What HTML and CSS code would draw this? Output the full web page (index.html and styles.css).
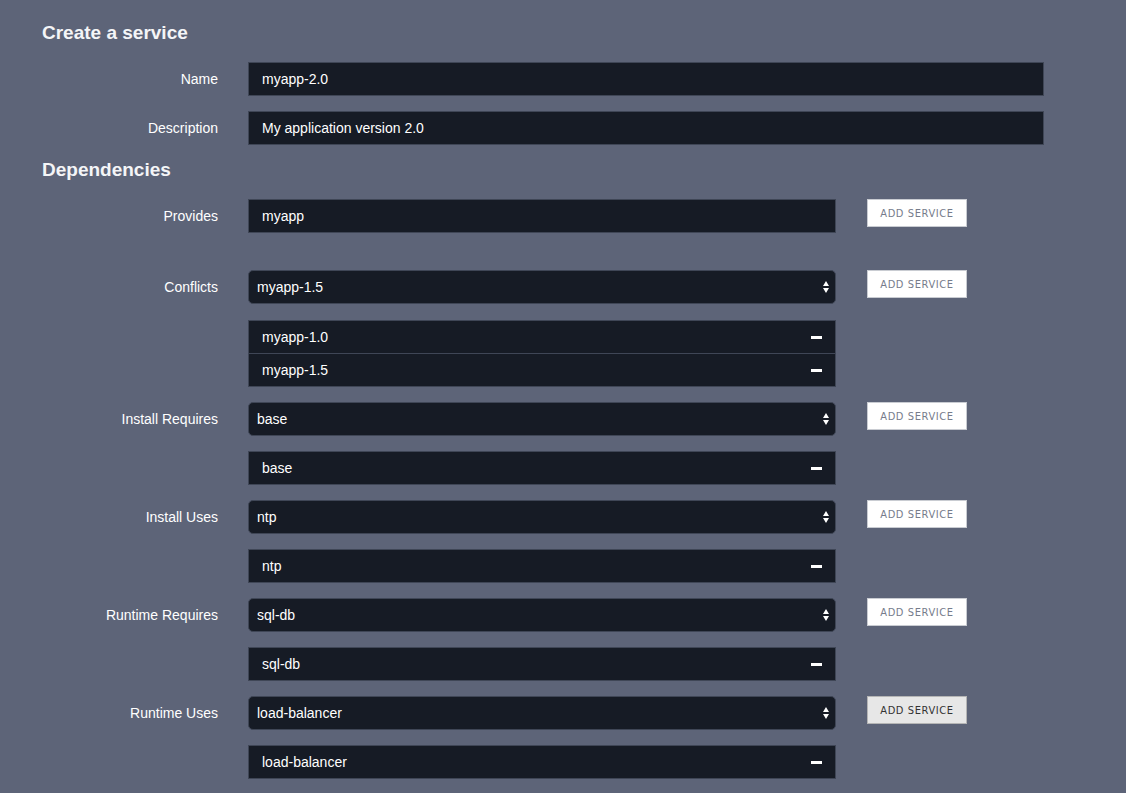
FILE: index.html
```html
<!DOCTYPE html>
<html>
<head>
<meta charset="utf-8">
<link rel="stylesheet" href="styles.css">
</head>
<body>
<div class="page">
  <h2 class="title">Create a service</h2>
  <div class="row">
    <div class="label">Name</div>
    <div class="field wide"><div class="input">myapp-2.0</div></div>
  </div>
  <div class="row">
    <div class="label">Description</div>
    <div class="field wide"><div class="input">My application version 2.0</div></div>
  </div>

  <h2 class="title deps">Dependencies</h2>

  <div class="row group provides">
    <div class="label">Provides</div>
    <div class="field"><div class="input">myapp</div></div>
    <button class="btn">ADD SERVICE</button>
  </div>

  <div class="row group">
    <div class="label">Conflicts</div>
    <div class="field">
      <div class="select"><span>myapp-1.5</span><svg class="arrows" width="6" height="12" viewBox="0 0 6 12"><path d="M3 0 L6 5 L0 5 Z M0 7 L6 7 L3 12 Z" fill="#fff"/></svg></div>
      <div class="list multi">
        <div class="item"><span>myapp-1.0</span><i class="minus"></i></div>
        <div class="item"><span>myapp-1.5</span><i class="minus"></i></div>
      </div>
    </div>
    <button class="btn">ADD SERVICE</button>
  </div>

  <div class="row group">
    <div class="label">Install Requires</div>
    <div class="field">
      <div class="select"><span>base</span><svg class="arrows" width="6" height="12" viewBox="0 0 6 12"><path d="M3 0 L6 5 L0 5 Z M0 7 L6 7 L3 12 Z" fill="#fff"/></svg></div>
      <div class="list">
        <div class="item"><span>base</span><i class="minus"></i></div>
      </div>
    </div>
    <button class="btn">ADD SERVICE</button>
  </div>

  <div class="row group">
    <div class="label">Install Uses</div>
    <div class="field">
      <div class="select"><span>ntp</span><svg class="arrows" width="6" height="12" viewBox="0 0 6 12"><path d="M3 0 L6 5 L0 5 Z M0 7 L6 7 L3 12 Z" fill="#fff"/></svg></div>
      <div class="list">
        <div class="item"><span>ntp</span><i class="minus"></i></div>
      </div>
    </div>
    <button class="btn">ADD SERVICE</button>
  </div>

  <div class="row group">
    <div class="label">Runtime Requires</div>
    <div class="field">
      <div class="select"><span>sql-db</span><svg class="arrows" width="6" height="12" viewBox="0 0 6 12"><path d="M3 0 L6 5 L0 5 Z M0 7 L6 7 L3 12 Z" fill="#fff"/></svg></div>
      <div class="list">
        <div class="item"><span>sql-db</span><i class="minus"></i></div>
      </div>
    </div>
    <button class="btn">ADD SERVICE</button>
  </div>

  <div class="row group">
    <div class="label">Runtime Uses</div>
    <div class="field">
      <div class="select"><span>load-balancer</span><svg class="arrows" width="6" height="12" viewBox="0 0 6 12"><path d="M3 0 L6 5 L0 5 Z M0 7 L6 7 L3 12 Z" fill="#fff"/></svg></div>
      <div class="list">
        <div class="item"><span>load-balancer</span><i class="minus"></i></div>
      </div>
    </div>
    <button class="btn active">ADD SERVICE</button>
  </div>
</div>
</body>
</html>
```

FILE: styles.css
```css
html, body {
  margin: 0;
  padding: 0;
  background: #5d6478;
  height: 100%;
  overflow: hidden;
}
body {
  font-family: "Liberation Sans", Arial, sans-serif;
  color: #fff;
  font-size: 14px;
}
.page {
  padding-top: 21px;
  display: flex;
  flex-direction: column;
}
.title {
  margin: 0 0 17px 42px;
  font-size: 19px;
  line-height: 24px;
  font-weight: bold;
  color: #f4f5f7;
}
.title.deps {
  margin-top: -2px;
  margin-bottom: 17px;
}
.row {
  display: flex;
  align-items: flex-start;
  margin-bottom: 15px;
}
.row.provides {
  margin-bottom: 37px;
}
.label {
  width: 218px;
  flex: none;
  text-align: right;
  line-height: 34px;
  height: 34px;
  margin-right: 30px;
  color: #fff;
}
.field {
  width: 588px;
  flex: none;
}
.field.wide {
  width: 796px;
}
.input {
  box-sizing: border-box;
  height: 34px;
  line-height: 32px;
  background: #161b25;
  border: 1px solid #3f4656;
  padding: 0 13px;
  color: #fff;
}
.select {
  box-sizing: border-box;
  height: 34px;
  background: #161b25;
  border: 1px solid #3f4656;
  border-radius: 5px;
  padding: 0 6px 0 8px;
  display: flex;
  align-items: center;
  justify-content: space-between;
  color: #fff;
}
.list {
  margin-top: 15px;
}
.list.multi {
  margin-top: 16px;
}
.item {
  box-sizing: border-box;
  height: 34px;
  background: #161b25;
  border: 1px solid #3f4656;
  padding: 0 13px;
  display: flex;
  align-items: center;
  justify-content: space-between;
}
.item + .item {
  margin-top: -1px;
}
.minus {
  display: block;
  width: 11px;
  height: 3px;
  background: #fff;
}
.btn {
  margin-left: 31px;
  box-sizing: border-box;
  width: 100px;
  height: 28px;
  background: #fff;
  border: 1px solid #c9ccd2;
  border-radius: 0;
  padding: 0;
  font-family: "DejaVu Sans Condensed", "Liberation Sans Narrow", "Liberation Sans", sans-serif;
  font-stretch: condensed;
  font-weight: normal;
  font-size: 11px;
  letter-spacing: 0.6px;
  color: #767c8b;
}
.btn.active {
  background: #e7e7e7;
  border-color: #b5b5b5;
  color: #333;
}
```
